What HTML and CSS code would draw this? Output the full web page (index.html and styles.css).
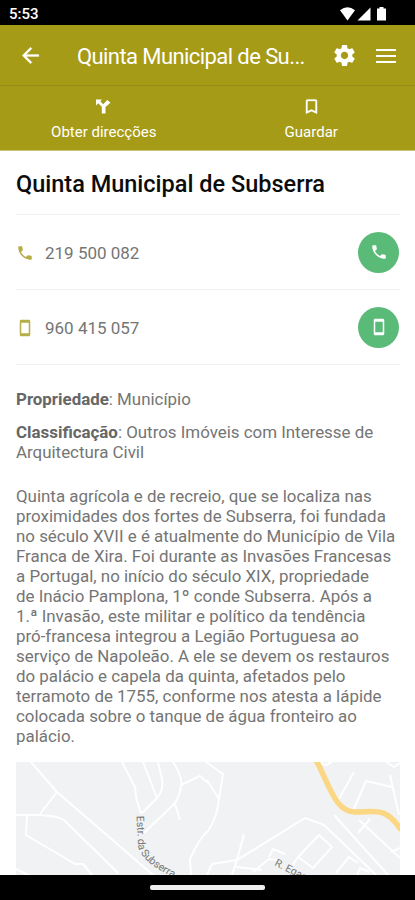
FILE: index.html
```html
<!DOCTYPE html>
<html lang="pt">
<head>
<meta charset="utf-8">
<meta name="viewport" content="width=device-width, initial-scale=1">
<title>Quinta Municipal de Subserra</title>
<link rel="stylesheet" href="styles.css">
</head>
<body>
<div class="screen">
  <div class="status">
    <span class="clock">5:53</span>
    <svg class="signals" viewBox="340 6 47 14" width="47" height="14" fill="#fff">
      <path d="M340 9.2Q347.500 3.200 355 9.200L347.500 19.500z"/>
      <path d="M370.500 6.500V19.500H357.500z"/>
      <path d="M379.500 6H383.500V7.500H386V19.500H377V7.500H379.500z"/>
    </svg>
  </div>
  <header class="bar">
    <svg class="back" viewBox="0 0 24 24"><path d="M20 11H7.830l5.590-5.590L12 4l-8 8 8 8 1.410-1.410L7.830 13H20z"/></svg>
    <div class="bar-title">Quinta Municipal de Su...</div>
    <svg class="gear" viewBox="0 0 24 24"><path d="M19.430 12.980c.04-.32.07-.64.07-.98s-.03-.66-.07-.98l2.110-1.650c.19-.15.24-.42.12-.64l-2-3.460c-.12-.22-.39-.3-.61-.22l-2.490 1c-.52-.4-1.080-.73-1.690-.98l-.38-2.650C14.460 2.180 14.250 2 14 2h-4c-.25 0-.46.18-.49.42l-.38 2.650c-.61.25-1.170.59-1.690.98l-2.490-1c-.23-.09-.49 0-.61.22l-2 3.460c-.13.22-.07.49.12.64l2.110 1.650c-.04.32-.07.65-.07.98s.03.66.07.98l-2.110 1.650c-.19.15-.24.42-.12.64l2 3.460c.12.22.39.3.61.22l2.490-1c.52.4 1.080.73 1.690.98l.38 2.650c.03.24.24.42.49.42h4c.25 0 .46-.18.49-.42l.38-2.650c.61-.25 1.170-.59 1.690-.98l2.490 1c.23.09.49 0 .61-.22l2-3.460c.12-.22.07-.49-.12-.64l-2.110-1.650zM12 15.500c-1.930 0-3.500-1.570-3.500-3.500s1.570-3.500 3.500-3.500 3.500 1.570 3.500 3.500-1.570 3.500-3.500 3.500z"/></svg>
    <svg class="menu" viewBox="0 0 20 14"><path d="M0 0h20v2H0zM0 6h20v2H0zM0 12h20v2H0z"/></svg>
  </header>
  <nav class="actions">
    <div class="action">
      <svg viewBox="0 0 19 19"><path d="M2 2.500H8L6.300 4.300 9.200 7.300 13.300 3 16.500 5.700 11.500 10V16.500H7.800V9.800L4.200 6.300 2 8.500z"/></svg>
      <span>Obter direcções</span>
    </div>
    <div class="action">
      <svg viewBox="0 0 24 24"><path d="M17 3H7c-1.100 0-1.990.9-1.990 2L5 21l7-3 7 3V5c0-1.100-.9-2-2-2zm0 15l-5-2.180L7 18V5h10v13z" stroke="#fff" stroke-width=".4"/></svg>
      <span class="save">Guardar</span>
    </div>
  </nav>
  <main class="content">
    <h1>Quinta Municipal de Subserra</h1>
    <div class="contact">
      <svg class="lead" viewBox="0 0 24 24"><path d="M6.620 10.790c1.440 2.830 3.760 5.140 6.590 6.590l2.200-2.200c.27-.27.67-.36 1.020-.24 1.120.37 2.330.57 3.570.57.55 0 1 .45 1 1V20c0 .55-.45 1-1 1-9.390 0-17-7.610-17-17 0-.55.45-1 1-1h3.500c.55 0 1 .45 1 1 0 1.250.2 2.450.57 3.570.11.35.03.74-.25 1.020l-2.200 2.200z"/></svg>
      <span class="number">219 500 082</span>
      <span class="call"><svg viewBox="0 0 24 24"><path d="M6.620 10.790c1.440 2.830 3.760 5.140 6.590 6.590l2.200-2.200c.27-.27.67-.36 1.020-.24 1.120.37 2.330.57 3.570.57.55 0 1 .45 1 1V20c0 .55-.45 1-1 1-9.390 0-17-7.610-17-17 0-.55.45-1 1-1h3.500c.55 0 1 .45 1 1 0 1.250.2 2.450.57 3.570.11.35.03.74-.25 1.020l-2.200 2.200z"/></svg></span>
    </div>
    <div class="contact">
      <svg class="lead" viewBox="0 0 24 24"><path d="M17 1.010L7 1c-1.100 0-2 .9-2 2v18c0 1.100.9 2 2 2h10c1.100 0 2-.9 2-2V3c0-1.100-.9-1.990-2-1.990zM17 19H7V5h10v14z"/></svg>
      <span class="number">960 415 057</span>
      <span class="call"><svg viewBox="0 0 24 24"><path d="M17 1.010L7 1c-1.100 0-2 .9-2 2v18c0 1.100.9 2 2 2h10c1.100 0 2-.9 2-2V3c0-1.100-.9-1.990-2-1.990zM17 19H7V5h10v14z"/></svg></span>
    </div>
    <p class="owner"><b>Propriedade</b>: Município</p>
    <p class="class"><b>Classificação</b>: Outros Imóveis com Interesse de<br>Arquitectura Civil</p>
    <p class="about">Quinta agrícola e de recreio, que se localiza nas<br>proximidades dos fortes de Subserra, foi fundada<br>no século XVII e é atualmente do Município de Vila<br>Franca de Xira. Foi durante as Invasões Francesas<br>a Portugal, no início do século XIX, propriedade<br>de Inácio Pamplona, 1º conde Subserra. Após a<br>1.ª Invasão, este militar e político da tendência<br>pró-francesa integrou a Legião Portuguesa ao<br>serviço de Napoleão. A ele se devem os restauros<br>do palácio e capela da quinta, afetados pelo<br>terramoto de 1755, conforme nos atesta a lápide<br>colocada sobre o tanque de água fronteiro ao<br>palácio.</p>
    <svg class="map" viewBox="16 762 384 113" width="384" height="113">
      <g class="roads">
        <path d="M31 762L57 792 153 875M57 792L40 814M16 815H40Q58 816 64 820L118 873M27 815L26 835 75 864 83 864 92 875M16 869L30 876"/>
        <path d="M122 762L135 787 136 797 141 814M142 813L157 798Q164 790 162 779L158 762M143 762L157 798M173 762Q183 777 181 786Q179 799 174 804L144 833M181 785L200 776 208 783M175 804L180 820"/>
        <path d="M206 762L223 774 219 799Q217 818 208 831Q200 837 190 859L191 875M207 780L219 799"/>
        <path d="M244 834L237 860 232 875M207 875L212 864 237 860M237 860L305 818 324 825 376 875M236 867L262 870M253 872L269 859 278 860M269 857L273 849 285 854"/>
        <path d="M298 857L319 835 332 847 313 868zM298 857L290 869M334 815L388 875M339 799L354 772M353 811L366 781 392 787M390 775L399 815M359 820L400 858M370 819L358 833M391 852L400 848M336 873L349 857 358 863M357 875L360 868 369 872M386 762L394 767 400 763M318 762L326 765 332 762"/>
      </g>
      <path class="highway" d="M316 760C330 786 335 812 355 812C374 812 386 806 401 830"/>
      <path id="lane" class="guide" d="M136.500 816L138 845Q139 860 172 877"/>
      <path id="street" class="guide" d="M274 865L307 882"/>
      <text class="place"><textPath href="#lane">Estr. da Subserra</textPath></text>
      <text class="place"><textPath href="#street">R. Egas</textPath></text>
    </svg>
  </main>
  <footer class="navbar"><span class="pill"></span></footer>
</div>
</body>
</html>
```
FILE: styles.css
```css
* { box-sizing: border-box; }
body {
  margin: 0;
  background: #fff;
  font-family: Roboto, "Liberation Sans", sans-serif;
}
.screen {
  display: flex;
  flex-direction: column;
  width: 415px;
  height: 900px;
  overflow: hidden;
}
.status {
  display: flex;
  flex: 0 0 25px;
  align-items: center;
  justify-content: space-between;
  padding: 2px 28px 0 9px;
  background: #000;
}
.clock { padding-top: 2px; color: #fff; font-size: 15px; font-weight: 500; line-height: 21px; }
.bar {
  display: flex;
  flex: 0 0 61px;
  align-items: center;
  padding: 1px 19px 0 18px;
  background: #a69b17;
  border-bottom: 1px solid #978d18;
  fill: #fff;
}
.back { width: 25px; height: 25px; stroke: #fff; stroke-width: .3; }
.bar-title {
  flex: 1;
  margin-left: 34px;
  padding-top: 2px;
  color: #fff;
  font-size: 22px;
  letter-spacing: -.58px;
  line-height: 28px;
  white-space: nowrap;
}
.gear { width: 25px; height: 25px; margin-right: 19px; }
.menu { width: 20px; height: 14px; }
.actions {
  display: grid;
  grid-template-columns: 1fr 1fr;
  flex: 0 0 65px;
  background: #a69b17;
  border-bottom: 1px solid #c9c374;
}
.action {
  display: flex;
  flex-direction: column;
  align-items: center;
  padding-top: 11px;
  color: #fff;
  fill: #fff;
  font-size: 15px;
  line-height: 20px;
}
.action svg { width: 19px; height: 19px; margin-bottom: 6px; }
.content {
  flex: 1;
  min-height: 0;
  padding: 0 15px 0 16px;
  overflow: hidden;
  color: #757575;
}
h1 {
  height: 64px;
  margin: 0;
  padding-top: 18px;
  border-bottom: 1px solid #f1f1f1;
  color: #0c0c0c;
  font-size: 23.500px;
  font-weight: 500;
  line-height: 30px;
  white-space: nowrap;
}
.contact {
  display: flex;
  align-items: center;
  height: 75px;
  border-bottom: 1px solid #f1f1f1;
}
.lead { width: 18px; height: 18px; margin-top: 2px; fill: #b5ad45; }
.number { flex: 1; margin-left: 11px; padding-top: 2px; font-size: 17px; line-height: 21px; }
.call {
  display: flex;
  align-items: center;
  justify-content: center;
  width: 41px;
  height: 41px;
  margin-right: 1px;
  border-radius: 50%;
  background: #5aba78;
}
.call svg { width: 18px; height: 18px; fill: #fff; }
p { margin: 0; font-size: 16.900px; line-height: 20px; white-space: nowrap; }
b { font-weight: 700; color: #666; }
.owner { margin-top: 24px; }
.class { margin-top: 13px; }
.about { margin-top: 24px; }
.map { display: block; margin-top: 16px; background: #f0f2f3; }
.roads { fill: none; stroke: #fff; stroke-width: 2; stroke-linejoin: round; }
.highway { fill: none; stroke: #fbd783; stroke-width: 5.500; }
.guide { fill: none; }
.place { fill: #777; font-size: 10.500px; }
.navbar {
  display: flex;
  flex: 0 0 25px;
  align-items: center;
  justify-content: center;
  background: #000;
}
.pill { width: 115px; height: 5px; border-radius: 2px; background: #eee; }
```
